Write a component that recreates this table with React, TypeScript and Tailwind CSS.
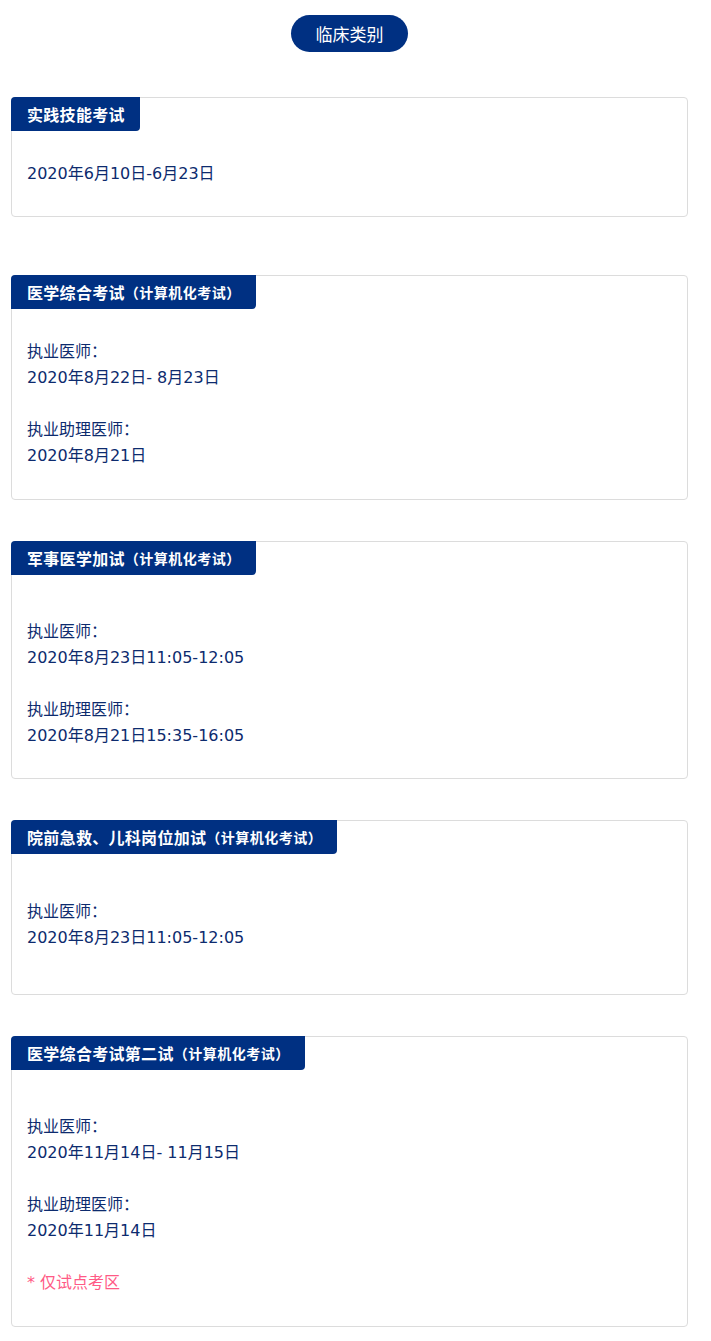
import React from 'react';

const font = { fontFamily: '"Noto Sans CJK SC", "Noto Sans", sans-serif' };
const bodyFont = { fontFamily: '"DejaVu Sans", "Noto Sans CJK SC", sans-serif' };

type Group = { label: string; date: string };

const Tag = ({ title, sub }: { title: string; sub?: string }) => (
  <div className="-ml-px -mt-px inline-flex h-[34px] items-center rounded-tl-[4px] rounded-br-[4px] bg-[#003082] pl-[16px] pr-[15px] text-white">
    <span className="text-[16px] font-bold tracking-[0.3px]">{title}</span>
    {sub && <span className="text-[14px] font-bold tracking-[0.5px]">（{sub}）</span>}
  </div>
);

const Card = ({
  title,
  sub,
  groups,
  note,
  top,
  bottom,
  className,
}: {
  title: string;
  sub?: string;
  groups: Group[];
  note?: string;
  top: string;
  bottom: string;
  className?: string;
}) => (
  <div className={`mx-[11px] w-[677px] rounded-[4px] border border-[#dcdcdc] bg-white ${className ?? ''}`}>
    <Tag title={title} sub={sub} />
    <div
      className={`px-[15px] text-[16px] leading-[26px] text-[#0d2b6e] ${top} ${bottom}`}
      style={bodyFont}
    >
      {groups.map((g, i) => (
        <div key={i} className={i > 0 ? 'mt-[26px]' : ''}>
          {g.label && <div>{g.label}</div>}
          <div>{g.date}</div>
        </div>
      ))}
      {note && <div className="mt-[26px] text-[#ff5a86]">{note}</div>}
    </div>
  </div>
);

export default function App() {
  return (
    <div className="w-[711px] bg-white pb-[15px]" style={font}>
      <div className="flex w-[699px] justify-center pt-[15px]">
        <div className="flex h-[37px] w-[117px] items-center justify-center rounded-full bg-[#003082] text-[17px] text-white">
          临床类别
        </div>
      </div>

      <Card
        className="mt-[45px]"
        title="实践技能考试"
        groups={[{ label: '', date: '2020年6月10日-6月23日' }]}
        top="pt-[30px]"
        bottom="pb-[29px]"
      />

      <Card
        className="mt-[58px]"
        title="医学综合考试"
        sub="计算机化考试"
        groups={[
          { label: '执业医师：', date: '2020年8月22日- 8月23日' },
          { label: '执业助理医师：', date: '2020年8月21日' },
        ]}
        top="pt-[30px]"
        bottom="pb-[30px]"
      />

      <Card
        className="mt-[41px]"
        title="军事医学加试"
        sub="计算机化考试"
        groups={[
          { label: '执业医师：', date: '2020年8月23日11:05-12:05' },
          { label: '执业助理医师：', date: '2020年8月21日15:35-16:05' },
        ]}
        top="pt-[44px]"
        bottom="pb-[29px]"
      />

      <Card
        className="mt-[41px]"
        title="院前急救、儿科岗位加试"
        sub="计算机化考试"
        groups={[{ label: '执业医师：', date: '2020年8月23日11:05-12:05' }]}
        top="pt-[45px]"
        bottom="pb-[43px]"
      />

      <Card
        className="mt-[41px]"
        title="医学综合考试第二试"
        sub="计算机化考试"
        groups={[
          { label: '执业医师：', date: '2020年11月14日- 11月15日' },
          { label: '执业助理医师：', date: '2020年11月14日' },
        ]}
        note="* 仅试点考区"
        top="pt-[44px]"
        bottom="pb-[30px]"
      />
    </div>
  );
}
